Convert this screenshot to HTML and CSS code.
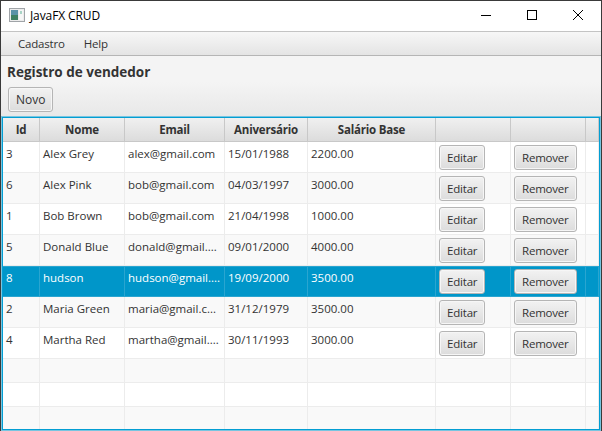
FILE: index.html
```html
<!DOCTYPE html>
<html lang="pt">
<head>
 <meta charset="UTF-8">
 <title>JavaFX CRUD</title>
 <link rel="stylesheet" href="styles.css">
</head>
<body>
 <div class="window">
 <div class="titlebar">
 <svg class="app-icon" width="16" height="16" viewBox="0 0 16 16">
 <rect x="0.5" y="1.5" width="15" height="13" fill="#ececec" stroke="#a0a4a8"/>
 <rect x="2" y="3" width="7" height="10" fill="#5b93a8"/>
 <rect x="2" y="8" width="7" height="5" fill="#3f8062"/>
 <rect x="10" y="3" width="4" height="10" fill="#f6f6f6"/>
 <rect x="11" y="4" width="2" height="3" fill="#a9d4c6"/>
 </svg>
 <span class="title">JavaFX CRUD</span>
 <div class="controls">
 <svg class="ctl" width="46" height="30" viewBox="0 0 46 30"><path d="M18 14.5h10" stroke="#000" fill="none"/></svg>
 <svg class="ctl" width="46" height="30" viewBox="0 0 46 30"><rect x="18.5" y="9.5" width="9" height="9" stroke="#000" fill="none"/></svg>
 <svg class="ctl" width="46" height="30" viewBox="0 0 46 30"><path d="M18 9l10 10M28 9l-10 10" stroke="#000" fill="none"/></svg>
 </div>
 </div>
 <div class="menubar">
 <span class="menu">Cadastro</span>
 <span class="menu">Help</span>
 </div>
 <div class="heading">Registro de vendedor</div>
 <div class="toolbar"><button class="btn btn-new">Novo</button></div>
 <div class="table-box">
 <table>
 <colgroup>
 <col class="c-id"><col class="c-nome"><col class="c-email"><col class="c-data">
 <col class="c-sal"><col class="c-btn"><col class="c-btn"><col>
 </colgroup>
 <thead>
 <tr><th>Id</th><th>Nome</th><th>Email</th><th>Aniversário</th><th>Salário Base</th><th></th><th></th><th></th></tr>
 </thead>
 <tbody>
 <tr class="data"><td>3</td><td>Alex Grey</td><td>alex@gmail.com</td><td>15/01/1988</td><td>2200.00</td><td class="action"><button class="btn">Editar</button></td><td class="action"><button class="btn">Remover</button></td><td></td></tr>
 <tr class="data odd"><td>6</td><td>Alex Pink</td><td>bob@gmail.com</td><td>04/03/1997</td><td>3000.00</td><td class="action"><button class="btn">Editar</button></td><td class="action"><button class="btn">Remover</button></td><td></td></tr>
 <tr class="data"><td>1</td><td>Bob Brown</td><td>bob@gmail.com</td><td>21/04/1998</td><td>1000.00</td><td class="action"><button class="btn">Editar</button></td><td class="action"><button class="btn">Remover</button></td><td></td></tr>
 <tr class="data odd"><td>5</td><td>Donald Blue</td><td>donald@gmail....</td><td>09/01/2000</td><td>4000.00</td><td class="action"><button class="btn">Editar</button></td><td class="action"><button class="btn">Remover</button></td><td></td></tr>
 <tr class="data selected"><td>8</td><td>hudson</td><td>hudson@gmail....</td><td>19/09/2000</td><td>3500.00</td><td class="action"><button class="btn">Editar</button></td><td class="action"><button class="btn">Remover</button></td><td></td></tr>
 <tr class="data odd"><td>2</td><td>Maria Green</td><td>maria@gmail.c...</td><td>31/12/1979</td><td>3500.00</td><td class="action"><button class="btn">Editar</button></td><td class="action"><button class="btn">Remover</button></td><td></td></tr>
 <tr class="data"><td>4</td><td>Martha Red</td><td>martha@gmail....</td><td>30/11/1993</td><td>3000.00</td><td class="action"><button class="btn">Editar</button></td><td class="action"><button class="btn">Remover</button></td><td></td></tr>
 <tr class="empty odd"><td></td><td></td><td></td><td></td><td></td><td></td><td></td><td></td></tr>
 <tr class="empty"><td></td><td></td><td></td><td></td><td></td><td></td><td></td><td></td></tr>
 <tr class="empty odd"><td></td><td></td><td></td><td></td><td></td><td></td><td></td><td></td></tr>
 </tbody>
 </table>
 </div>
 </div>
</body>
</html>
```

FILE: styles.css
```css
html, body {
 margin: 0;
 padding: 0;
}
body {
 font-family: "Open Sans", "Noto Sans", sans-serif;
 font-size: 11.5px;
 color: #333;
 background-color: #fff;
 overflow: hidden;
}
.window {
 width: 602px;
 height: 431px;
 box-sizing: border-box;
 border: 1px solid #3a3a3a;
 border-bottom: none;
 display: flex;
 flex-direction: column;
 overflow: hidden;
 background-color: #ececec;
}
.titlebar {
 height: 30px;
 display: flex;
 align-items: center;
 padding-left: 8px;
 background-color: #fff;
 color: #000;
}
.app-icon {
 margin-bottom: 2px;
}
.title {
 margin-left: 5px;
 margin-bottom: 2px;
 font-size: 12px;
 letter-spacing: -0.1px;
}
.controls {
 margin-left: auto;
 display: flex;
}
.ctl {
 display: block;
}
.menubar {
 height: 25px;
 box-sizing: border-box;
 display: flex;
 align-items: center;
 padding-left: 17px;
 gap: 19px;
 letter-spacing: -0.2px;
 background: linear-gradient(#f7f7f7, #e4e4e4);
 border-top: 1px solid #c4c4c4;
 border-bottom: 1px solid #b5b5b5;
}
.heading {
 height: 26px;
 box-sizing: border-box;
 padding: 6px 0 0 6px;
 line-height: 20px;
 font-size: 13.5px;
 font-weight: bold;
 background-color: #f4f4f4;
 color: #333;
}
.toolbar {
 height: 34px;
 padding: 5px 0 0 7px;
 box-sizing: border-box;
 background: linear-gradient(#f4f4f4, #e8e8e8);
}
.btn {
 font-family: inherit;
 font-size: 11.5px;
 letter-spacing: -0.2px;
 color: #333;
 height: 25px;
 padding: 0 7px;
 border: 1px solid #b5b5b5;
 border-radius: 3px;
 background: linear-gradient(#f2f2f2, #dcdcdc);
 box-shadow: inset 0 0 0 1px #f6f6f6;
}
.btn-new {
 font-size: 12px;
 letter-spacing: 0;
 padding: 0 7px;
}
.table-box {
 flex: 1;
 min-height: 0;
 border: 1px solid #039ed3;
 box-shadow: 0 0 0 1px rgba(3, 158, 211, 0.5);
 margin: 1px;
 background-color: #fff;
 overflow: hidden;
}
table {
 width: 100%;
 border-collapse: separate;
 border-spacing: 0;
 table-layout: fixed;
}
.c-id { width: 37px; }
.c-nome { width: 85px; }
.c-email { width: 100px; }
.c-data { width: 83px; }
.c-sal { width: 128px; }
.c-btn { width: 75px; }
th {
 height: 24px;
 padding: 0 0 1px;
 font-size: 11.5px;
 font-weight: bold;
 letter-spacing: -0.2px;
 text-align: center;
 color: #333;
 background: linear-gradient(#f0f0f0, #dcdcdc);
 border-right: 1px solid #c8c8c8;
 border-bottom: 1px solid #c8c8c8;
 box-sizing: border-box;
}
td {
 padding: 0 0 0 3px;
 white-space: nowrap;
 overflow: hidden;
 border-right: 1px solid #ececec;
 border-bottom: 1px solid #ececec;
 box-sizing: border-box;
 vertical-align: middle;
}
.data td {
 height: 31px;
 padding-bottom: 7px;
}
.data .action {
 padding: 0 0 0 3px;
}
.empty td {
 height: 24px;
}
.odd td {
 background-color: #f9f9f9;
}
.selected td {
 background-color: #0096c9;
 color: #fff;
 border-right-color: #2aa5d0;
 border-bottom-color: #2aa5d0;
 box-shadow: inset 0 1px #2aa5d0;
}
```
